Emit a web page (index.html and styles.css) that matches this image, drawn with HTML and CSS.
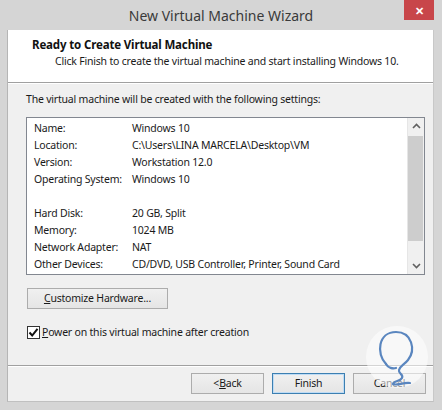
FILE: index.html
```html
<!DOCTYPE html>
<html>
<head>
<meta charset="utf-8">
<link rel="stylesheet" href="styles.css">
</head>
<body>
<div class="window">
  <div class="titlebar">
    <span></span>
    <span class="title">New Virtual Machine Wizard</span>
    <span class="close-wrap"><span class="close">✕</span></span>
  </div>
  <div class="client">
    <div class="header">
      <div class="h-title">Ready to Create Virtual Machine</div>
      <div class="h-sub">Click Finish to create the virtual machine and start installing Windows 10.</div>
    </div>
    <div class="body">
      <div class="intro">The virtual machine will be created with the following settings:</div>
      <div class="listbox">
        <div class="rows">
          <div class="row"><span class="lbl">Name:</span><span>Windows 10</span></div>
          <div class="row"><span class="lbl">Location:</span><span>C:\Users\LINA MARCELA\Desktop\VM</span></div>
          <div class="row"><span class="lbl">Version:</span><span>Workstation 12.0</span></div>
          <div class="row"><span class="lbl">Operating System:</span><span>Windows 10</span></div>
          <div class="row"></div>
          <div class="row"><span class="lbl">Hard Disk:</span><span>20 GB, Split</span></div>
          <div class="row"><span class="lbl">Memory:</span><span>1024 MB</span></div>
          <div class="row"><span class="lbl">Network Adapter:</span><span>NAT</span></div>
          <div class="row"><span class="lbl">Other Devices:</span><span>CD/DVD, USB Controller, Printer, Sound Card</span></div>
        </div>
        <div class="scrollbar">
          <svg class="arrow" width="17" height="17" viewBox="0 0 17 17"><path d="M5 10 L8.5 6.5 L12 10" fill="none" stroke="#606060" stroke-width="1.6"/></svg>
          <div class="track"><div class="thumb"></div></div>
          <svg class="arrow" width="17" height="17" viewBox="0 0 17 17"><path d="M5 7 L8.5 10.5 L12 7" fill="none" stroke="#606060" stroke-width="1.6"/></svg>
        </div>
      </div>
      <div class="btn custom"><u>C</u>ustomize Hardware...</div>
      <label class="check">
        <span class="box"><svg width="11" height="11" viewBox="0 0 11 11"><path d="M1.5 5.5 L4.2 8.5 L9.5 1.8" fill="none" stroke="#111" stroke-width="2"/></svg></span>
        <span><u>P</u>ower on this virtual machine after creation</span>
      </label>
    </div>
    <div class="footer">
      <div class="btn">&lt; <u>B</u>ack</div>
      <div class="btn default">Finish</div>
      <div class="btn">Cancel</div>
    </div>
    <svg class="watermark" width="64" height="70" viewBox="0 0 64 70">
      <circle cx="31" cy="33" r="31" fill="rgba(255,255,255,0.55)"/>
      <path d="M20 40 C10 30 12 8 30 8 C46 8 50 26 42 36 C38 41 34 42 33 46 C32 50 38 50 36 54 C34 58 28 56 27 60 C30 62 38 58 44 59" fill="none" stroke="#5a86bf" stroke-width="2.2" stroke-linecap="round" stroke-linejoin="round"/>
      <path d="M20 40 C22 44 27 45 30 44" fill="none" stroke="#5a86bf" stroke-width="2.2" stroke-linecap="round"/>
    </svg>
  </div>
</div>
</body>
</html>
```
FILE: styles.css
```css
* { box-sizing: border-box; }
html, body { margin: 0; padding: 0; }
body {
  width: 442px;
  height: 410px;
  background: #d3d3d3;
  font-family: "Noto Sans", "Open Sans", sans-serif;
  font-size: 10.5px;
  letter-spacing: -0.2px;
  color: #1a1a1a;
  overflow: hidden;
}
.window {
  width: 442px;
  height: 410px;
  display: flex;
  flex-direction: column;
  background: #d5d5d5;
}
.titlebar {
  height: 30px;
  display: grid;
  grid-template-columns: 1fr auto 1fr;
  align-items: start;
}
.title {
  font-size: 14px;
  color: #3a3a3a;
  line-height: 32px;
  letter-spacing: 0;
}
.close-wrap {
  display: flex;
  justify-content: flex-end;
  padding-right: 8px;
}
.close {
  width: 30px;
  height: 20px;
  background: #c8464a;
  color: #fff;
  font-size: 11px;
  font-weight: bold;
  display: flex;
  align-items: center;
  justify-content: center;
}
.client {
  position: relative;
  flex: 1;
  margin: 0 8px 8px 7px;
  background: #f0f0f0;
  border-left: 1px solid #b5b5b5;
  border-right: 1px solid #c8c8c8;
  border-bottom: 1px solid #c0c0c0;
  display: flex;
  flex-direction: column;
}
.header {
  background: #fff;
  height: 53px;
  border-bottom: 1px solid #a0a0a0;
  box-shadow: 0 1px 0 #fff;
  padding: 7px 0 0 24px;
}
.h-title {
  font-weight: bold;
  font-size: 11.5px;
  letter-spacing: -0.15px;
  line-height: 16px;
  color: #111;
}
.h-sub {
  padding-left: 23px;
  line-height: 16px;
  color: #1a1a1a;
}
.body {
  padding: 8px 9px 0 18px;
  flex: 1;
}
.intro {
  line-height: 16px;
}
.listbox {
  margin-top: 10px;
  width: 399px;
  height: 158px;
  background: #fff;
  border: 1px solid #828790;
  display: flex;
}
.rows {
  flex: 1;
  padding: 2px 0 0 7px;
}
.row {
  height: 17px;
  line-height: 17px;
  display: flex;
  white-space: nowrap;
}
.lbl { width: 98px; }
.scrollbar {
  width: 17px;
  display: flex;
  flex-direction: column;
  background: #f0f0f0;
  border-left: 1px solid #e6e6e6;
}
.arrow { display: block; flex: none; }
.track {
  flex: 1;
  padding: 1px 1px 1px 0;
}
.thumb {
  height: 105px;
  background: #cdcdcd;
}
.btn {
  height: 21px;
  border: 1px solid #acacac;
  background: linear-gradient(#f0f0f0, #e5e5e5);
  display: flex;
  align-items: center;
  justify-content: center;
  line-height: 1;
}
.custom {
  margin-top: 13px;
  width: 141px;
  margin-left: 1px;
}
.check {
  margin-top: 15px;
  display: flex;
  align-items: center;
  gap: 2px;
  line-height: 16px;
  margin-left: 1px;
}
.box {
  width: 13px;
  height: 13px;
  border: 1px solid #333;
  background: #fff;
  display: flex;
  align-items: center;
  justify-content: center;
}
.footer {
  height: 36px;
  border-top: 1px solid #a0a0a0;
  box-shadow: inset 0 1px 0 #fff;
  display: flex;
  justify-content: flex-end;
  gap: 8px;
  padding: 7px 7px 0 0;
}
.footer .btn { width: 73px; }
.footer .default { border-color: #3c7fb1; box-shadow: inset 0 0 0 1px #bfdcf5; }
.watermark {
  position: absolute;
  left: 358px;
  top: 294px;
  pointer-events: none;
}
```
